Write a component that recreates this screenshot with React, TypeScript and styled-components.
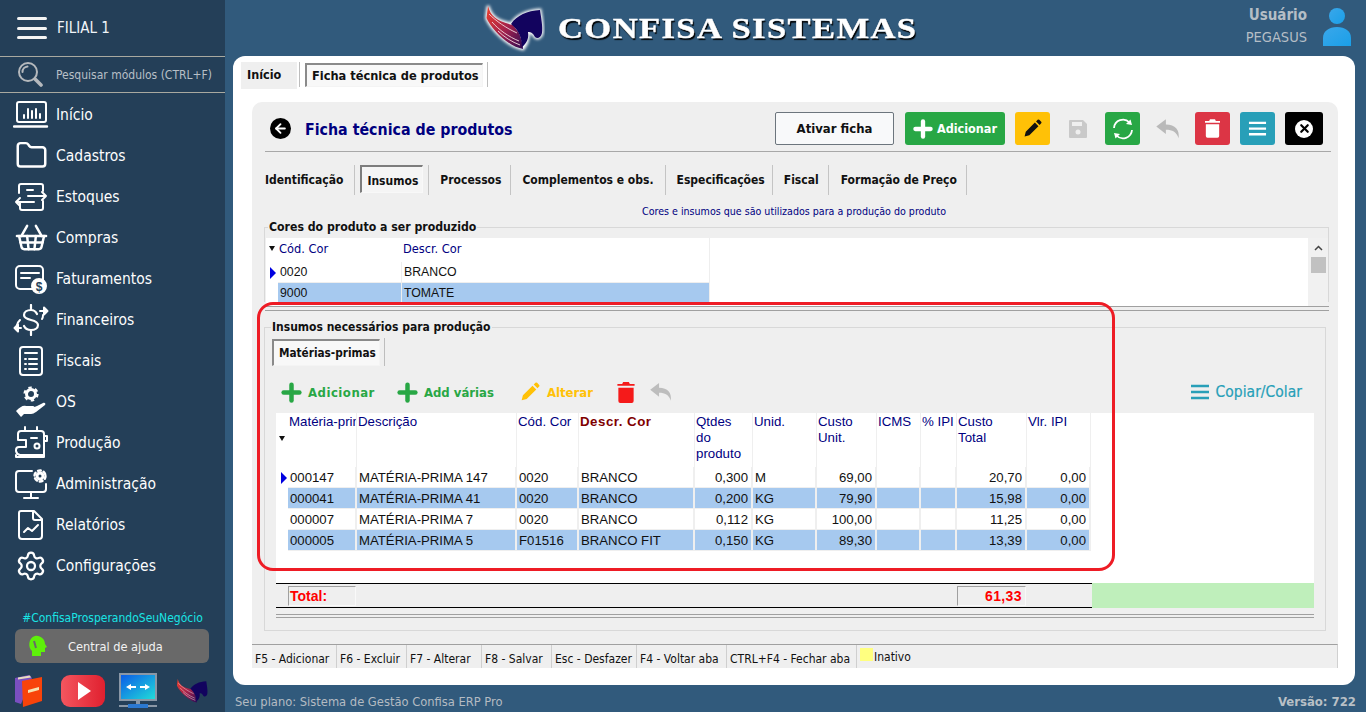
import React from 'react';
import styled, { createGlobalStyle } from 'styled-components';
import { Plus, X, ArrowLeft, Folder, ShoppingBasket, Settings } from 'lucide-react';

const UI = `"DejaVu Sans Condensed", "Noto Sans", sans-serif`;
const GRID = `"Liberation Sans", Arial, sans-serif`;

const Global = createGlobalStyle`
  html, body { margin: 0; padding: 0; height: 712px; overflow: hidden; background: #315a7c; }
  * { box-sizing: border-box; }
  #root { height: 712px; }
`;

const Page = styled.div`display: grid; grid-template-columns: 225px 1fr; height: 712px; font-family: ${UI};`;
const Side = styled.aside`background: #243f58; color: #fff; display: flex; flex-direction: column; height: 712px;`;
const SideHead = styled.div`height: 57px; display: flex; align-items: center; gap: 10px; padding: 0 0 0 17px; border-bottom: 1px solid #a9a9a0; font-size: 15px; color: #f0f4f8;`;
const Burger = styled.div`width: 30px; height: 22px; display: flex; flex-direction: column; justify-content: space-between; span { display: block; height: 3px; background: #f4f4f4; border-radius: 2px; }`;
const SearchRow = styled.div`height: 36px; display: flex; align-items: center; padding: 1px 0 0 17px; gap: 13px; border-bottom: 1px solid #a9a9a0; font-size: 12px; color: #b8bfc6;`;
const MenuList = styled.nav`display: flex; flex-direction: column; padding-top: 1px;`;
const MenuRow = styled.div`height: 41px; display: flex; align-items: center; font-size: 15.5px; color: #fdfdfd; padding-left: 13px;`;
const IconSlot = styled.span`width: 36px; height: 34px; display: flex; align-items: center; justify-content: center; margin-right: 7px;`;
const SideBottom = styled.div`margin-top: auto; padding-bottom: 3px; display: flex; flex-direction: column; align-items: stretch;`;
const HashTag = styled.div`color: #19e4e4; font-size: 12px; text-align: center; margin-bottom: 4px;`;
const HelpBtn = styled.div`margin: 0 16px 0 15px; height: 34px; border-radius: 6px; background: #696969; display: flex; align-items: center; color: #f2f2f2; font-size: 12.7px; padding-left: 12px; span { margin-left: 21px; }`;
const AppIcons = styled.div`display: flex; align-items: center; padding-left: 14px; height: 36px; margin-top: 10px;`;
const AppGap = styled.span<{ $w: number }>`display: block; width: ${p => p.$w}px;`;

const Main = styled.main`display: flex; flex-direction: column; background: #315a7c; height: 712px; min-width: 0;`;
const Top = styled.header`height: 56px; display: flex; align-items: center; padding: 0 14px 0 258px; flex: none;`;
const Brand = styled.div`font-family: "Liberation Serif", serif; font-weight: 700; font-size: 30px; color: #fff; letter-spacing: 1.2px; margin-left: 13px; text-shadow: 1px 2px 1px #000; -webkit-text-stroke: .4px #fff; transform: scaleX(1.153); transform-origin: left center; white-space: nowrap;`;
const User = styled.div`margin-left: auto; display: flex; align-items: center; gap: 15px;`;
const UserText = styled.div`text-align: right; color: #b5bec6; font-size: 14.5px; line-height: 22px; margin-top: -4px; b { font-size: 15px; display: block; }`;

const Card = styled.section`margin: 0 11px 0 8px; height: 629px; flex: none; background: #fff; border-radius: 12px; padding: 6px 18px 0 8px; display: flex; flex-direction: column;`;
const TopTabs = styled.div`display: flex; height: 27px; align-items: stretch; font-size: 12.5px; font-weight: 700; color: #111;`;
const HomeTab = styled.div`width: 56px; background: #efefef; padding: 5px 0 0 6px;`;
const Sep = styled.i<{ $h?: number; $ml?: number }>`display: block; width: 1px; background: #bdbdbd; margin: 0 5px 0 ${p => p.$ml ?? 2}px; height: ${p => p.$h ?? 25}px;`;
const ActiveTab = styled.div<{ $s?: number; $h?: number }>`height: ${p => p.$h ?? 24}px; margin-top: 1px; padding: 2px 3px 0 5px; border: 1px solid #f4f4f4; border-top: 2px solid #8a8a8a; border-left: 2px solid #8a8a8a; background: #f8f8f8; white-space: nowrap; line-height: ${p => (p.$h ?? 24) - 7}px; font-size: ${p => p.$s ?? 12.7}px;`;
const Panel = styled.div`margin: 13px 0 0 11px; width: 1086px; height: 566px; background: #efefef; border-radius: 10px 10px 0 0; display: flex; flex-direction: column;`;
const PanelHead = styled.div`height: 50px; margin: 0 7px 0 13px; border-bottom: 1px solid #a8a8a8; display: flex; align-items: flex-start; padding: 10px 8px 0 5px; flex: none;`;
const BackDot = styled.span`width: 21px; height: 21px; margin-top: 6px; border-radius: 50%; background: #000; color: #fff; display: flex; align-items: center; justify-content: center;`;
const Title = styled.h1`margin: 7px 0 0 14px; font-size: 15.8px; line-height: 22px; font-weight: 700; color: #00007f;`;
const Actions = styled.div`margin-left: auto; display: flex; gap: 10px;`;
const OutlineBtn = styled.div`width: 119px; height: 33px; margin-right: 1px; background: #f8f9fa; border: 1px solid #6c757d; border-radius: 2px; color: #111; font-size: 13px; font-weight: 700; display: flex; align-items: center; justify-content: center;`;
const SquareBtn = styled.div<{ $bg: string; $w?: number }>`width: ${p => p.$w ?? 35}px; height: 33px; border-radius: 3px; background: ${p => p.$bg}; color: #fff; display: flex; align-items: center; justify-content: center; font-size: 12.5px; font-weight: 700;`;
const AddBtn = styled(SquareBtn)`gap: 1px; padding-right: 3px;`;
const CloseDot = styled.span`width: 18px; height: 18px; border-radius: 9px; background: #fff; color: #000; display: flex; align-items: center; justify-content: center;`;
const TabsRow = styled.div`display: flex; align-items: stretch; height: 30px; margin: 13px 0 0 13px; font-size: 12px; font-weight: 700; color: #111; flex: none;`;
const SubTab = styled.div`padding: 7px 0 0; white-space: nowrap; line-height: 17px;`;
const TabLine = styled.i<{ $ml?: number; $mr?: number }>`display: block; width: 1px; background: #c4c4c4; margin: 0 ${p => p.$mr ?? 11}px 0 ${p => p.$ml ?? 10}px;`;
const ActiveSub = styled.div`height: 28px; padding: 5px 4px 0 5px; border: 1px solid #f8f8f8; border-top: 2px solid #7d7d7d; border-left: 2px solid #7d7d7d; background: #f5f5f5; line-height: 18px;`;
const Caption = styled.div`height: 20px; margin-top: 6px; padding-left: 390px; color: #00007f; font-size: 10.6px; line-height: 20px; flex: none; white-space: nowrap;`;
const Box = styled.fieldset`margin: 0; padding: 0; min-width: 0; border: 1px solid #d8d8d8; flex: none;`;
const Legend = styled.legend<{ $ml: number; $s: number }>`font-size: ${p => p.$s}px; font-weight: 700; color: #111; padding: 0 1px; margin-left: ${p => p.$ml}px; line-height: 14px;`;
const CoresBox = styled(Box)`margin: -1px 9px 0 12px; height: 82px; border-bottom: none;`;
const CoresWrap = styled.div`display: grid; grid-template-columns: 1fr 20px; height: 68px; background: #fff; margin: 4px 0 0 1px; font-family: ${GRID};`;
const CoresGrid = styled.div`display: grid; grid-template-rows: 24px 21px 21px;`;
const CoresHead = styled.div`display: grid; grid-template-columns: 13px 124px 306px; align-items: center; color: #00007f; width: 444px; padding-bottom: 4px; border-right: 1px solid #eee; font-family: ${UI}; font-size: 12.7px;`;
const CoresRow = styled.div`display: grid; grid-template-columns: 12px 124px 308px; font-size: 12.3px; color: #111; align-items: stretch; line-height: 20px; width: 444px;`;
const Ind = styled.span`display: flex; align-items: center; justify-content: center; font-size: 8px; color: #111; padding-right: 1px;`;
const Arrow = styled.span<{ $ml?: number }>`display: block; width: 0; height: 0; border-left: 6px solid #0000e0; border-top: 6px solid transparent; border-bottom: 6px solid transparent; margin: 0 0 0 ${p => p.$ml ?? 2}px;`;
const SortTri = styled.span`display: block; width: 0; height: 0; border-left: 3px solid transparent; border-right: 3px solid transparent; border-top: 5px solid #111;`;
const CCell = styled.span<{ $sel?: boolean }>`padding-left: 2px; background: ${p => p.$sel ? '#a6c9ef' : '#fff'}; border-right: 1px solid #eee; border-bottom: 1px solid #eee;`;
const ScrollBar = styled.div`background: #f1f1f1; display: flex; flex-direction: column; align-items: center; padding-top: 7px; gap: 6px; font-size: 0;`;
const ScrollThumb = styled.div`width: 15px; height: 16px; background: #c1c1c1;`;
const Splitter = styled.div`height: 5px; margin: 4px 9px 0 13px; border-top: 1px solid #a0a0a0; border-bottom: 1px solid #a0a0a0; flex: none;`;
const InsumosBox = styled(Box)`margin: 9px 12px 0 12px; height: 311px; padding: 0 0 0 7px; display: block;`;
const InnerTab = styled.div`display: flex; height: 28px; margin-top: 4px; font-size: 12px; font-weight: 700; color: #111;`;
const GridTools = styled.div`display: flex; align-items: center; height: 24px; margin: 14px 0 0 6px; font-size: 13px; font-weight: 700; white-space: nowrap;`;
const Tool = styled.div<{ $c: string; $ml?: number; $gap?: number; $ls?: number }>`display: flex; align-items: center; gap: ${p => p.$gap ?? 7}px; color: ${p => p.$c}; margin-left: ${p => p.$ml ?? 0}px; letter-spacing: ${p => p.$ls ?? 0}px;`;
const CopyTool = styled(Tool)`margin-left: auto; margin-right: 23px; font-weight: 400; gap: 6px; font-size: 15.5px; -webkit-text-stroke: .2px currentColor;`;
const TableArea = styled.div`margin: 9px 0 0 4px; width: 1038px; height: 170px; background: #fff; font-family: ${GRID}; font-size: 13.2px; color: #111;`;
const TPL = `12px 69px 160px 62px 116px 58px 64px 60px 44px 36px 70px 64px`;
const THead = styled.div`display: grid; grid-template-columns: ${TPL}; width: 815px; height: 54px; color: #00007f; font-size: 13.3px; line-height: 16px;`;
const Th = styled.span<{ $red?: boolean }>`padding: 1px 0 0 1px; border-right: 1px solid #efefef; overflow: hidden; white-space: pre; color: ${p => p.$red ? '#7f0000' : 'inherit'}; font-weight: ${p => p.$red ? 700 : 400}; letter-spacing: ${p => p.$red ? '.5px' : '0'};`;
const IndHead = styled.span`display: flex; align-items: flex-start; justify-content: center; padding: 23px 0 0 0;`;
const TRow = styled.div`display: grid; grid-template-columns: ${TPL}; width: 815px; height: 21px; line-height: 22px;`;
const Td = styled.span<{ $sel?: boolean; $r?: boolean }>`padding: 0 ${p => p.$r ? 3 : 1}px 0 2px; background: ${p => p.$sel ? '#a6c9ef' : '#fff'}; border-right: 2px solid #efefef; border-bottom: 1px solid #efefef; text-align: ${p => p.$r ? 'right' : 'left'}; white-space: nowrap; overflow: hidden;`;
const TIndCell = styled.span`display: flex; align-items: center;`;
const TotalBar = styled.div`display: grid; grid-template-columns: 816px 222px; margin-left: 4px; width: 1038px; height: 25px; font-family: ${GRID};`;
const TotalLeft = styled.div`border-top: 1px solid #000; border-bottom: 1px solid #000; display: grid; grid-template-columns: 12px 68px 601px 69px; align-items: center;`;
const TotalCell = styled.span<{ $r?: boolean }>`height: 20px; border: 1px solid #f9f9f9; border-top-color: #a0a0a0; border-left-color: #a0a0a0; color: #f00; font-weight: 700; font-size: 14px; line-height: 18px; padding: 0 3px 0 1px; text-align: ${p => p.$r ? 'right' : 'left'}; letter-spacing: ${p => p.$r ? '.4px' : '0'};`;
const Green = styled.div`background: #bfefbb;`;
const DoubleLine = styled.div`height: 4px; margin: 6px 0 0 4px; width: 1038px; border-top: 1px solid #a0a0a0; border-bottom: 1px solid #a0a0a0;`;
const Status = styled.div`margin-top: auto; height: 24px; flex: none; border-top: 1px solid #a0a0a0; border-right: 1px solid #d0d0d0; display: flex; align-items: stretch; font-size: 12px; color: #111;`;
const StatusCell = styled.div<{ $w: number }>`width: ${p => p.$w}px; display: flex; align-items: center; padding: 5px 0 0 3px; border-right: 1px solid #cfcfcf; white-space: nowrap;`;
const Inativo = styled.div`display: flex; align-items: flex-start; padding: 3px 0 0 3px; i { display: block; width: 13px; height: 13px; background: #ffff80; margin-right: 1px; } span { margin-top: 2px; }`;
const Bottom = styled.footer`height: 27px; flex: none; display: flex; justify-content: space-between; align-items: center; padding: 6px 10px 0 10px; color: #b4bbc2; font-size: 12.8px;`;
const Version = styled.b`font-size: 13px; color: #b9c0c6;`;
const RedMark = styled.div`position: absolute; left: 257px; top: 302px; width: 858px; height: 269px; border: 3px solid #ee1c25; border-radius: 16px; pointer-events: none; z-index: 5;`;

const S = { fill: 'none', stroke: '#fff', strokeWidth: 2, strokeLinecap: 'round' as const, strokeLinejoin: 'round' as const };

const ILaptop = () => <svg width="36" height="30" viewBox="0 0 36 30" {...S}><rect x="4" y="2" width="29" height="20" rx="2" /><path d="M1 26.500h33" strokeWidth="2.400" /><path d="M11 18v-3M15 18V9M19 18v-7M23 18v-9M27 18v-4" strokeWidth="2" /></svg>;
const IFolder = () => <Folder size={33} color="#fff" strokeWidth={1.8} />;
const IBoxes = () => <svg width="34" height="30" viewBox="0 0 34 30" {...S}><path d="M5 11V4a2 2 0 0 1 2-2h20a2 2 0 0 1 2 2v5M6 21v5a2 2 0 0 0 2 2h19a2 2 0 0 0 2-2v-7" /><path d="M13 8h6M14 14h18M28 10l4 4-4 4M20 20H2M6 16l-4 4 4 4" /></svg>;
const IBasket = () => <ShoppingBasket size={35} color="#fff" strokeWidth={1.7} />;
const IBill = () => <svg width="36" height="30" viewBox="0 0 36 30" {...S}><path d="M25 2H7a4 4 0 0 0-4 4v15a4 4 0 0 0 4 4h12M30 16V6a4 4 0 0 0-4-4" /><path d="M8 9h18M8 14h9" /><circle cx="26" cy="22" r="7" fill="#fff" stroke="#fff" /><text x="26" y="26.500" fontSize="12" fontFamily="Liberation Sans" fontWeight="700" textAnchor="middle" fill="#243f58" stroke="none">$</text></svg>;
const IMoney = () => <svg width="36" height="32" viewBox="0 0 36 32" {...S}><path d="M24 10c-1-2-3-4-6-4-4 0-7 2-7 5s3 4 7 5 7 2 7 5-3 5-7 5c-3 0-6-2-7-4M18 1v4M18 27v4" strokeWidth="2.200" /><path d="M27 7h6" /><path d="M31 3.500l3.500 3.500-3.500 3.500z" fill="#fff" /><path d="M3 24h5" /><path d="M5 20.500L1.500 24 5 27.500z" fill="#fff" /><path d="M7 16c-1 1-3 3-3 5M29 15c1-1 1-2 1-4" /></svg>;
const IDoc = () => <svg width="26" height="32" viewBox="0 0 26 32" {...S}><rect x="2" y="2" width="22" height="28" rx="3" /><path d="M7 8h12M7 14h1M11 14h8M7 19h1M11 19h8M7 24h1M11 24h8" /></svg>;
const IHand = () => <svg width="32" height="32" viewBox="0 0 32 32"><path d="M1 25c4-4 7-6 10-5h7c2 0 2 3 0 3h-4l8-3 6-3c2-1 3 1 2 2l-9 7c-2 1-3 2-5 2H9l-3 3z" fill="#fff" /><circle cx="16" cy="8" r="4.500" fill="none" stroke="#fff" strokeWidth="3" /><circle cx="16" cy="8" r="6.500" fill="none" stroke="#fff" strokeWidth="2.200" strokeDasharray="3.400 3.400" /></svg>;
const ISew = () => <svg width="36" height="34" viewBox="0 0 36 34" {...S}><path d="M5 14V8a3 3 0 0 1 3-3h20a3 3 0 0 1 3 3v21H7a5 5 0 0 1-4-4v-1c0-2 1-3 3-3h7v-7H5" /><path d="M3 29v2h28v-2M12 1v4M24 1v4M31 10h3v5h-3" /><circle cx="24" cy="20" r="2.500" /><path d="M18 12h6" /></svg>;
const IAdmin = () => <svg width="36" height="32" viewBox="0 0 36 32" {...S}><path d="M19 3H6a3 3 0 0 0-3 3v15a3 3 0 0 0 3 3h24a3 3 0 0 0 3-3v-5M18 24v5M11 30h14" /><circle cx="27" cy="8" r="3" strokeWidth="3" /><circle cx="27" cy="8" r="5.500" strokeWidth="2.400" strokeDasharray="2.900 2.900" /></svg>;
const IReport = () => <svg width="28" height="32" viewBox="0 0 28 32" {...S}><path d="M4 2h13l8 8v17a3 3 0 0 1-3 3H5a3 3 0 0 1-3-3V4a2 2 0 0 1 2-2zM16 2v7a2 2 0 0 0 2 2h7" /><path d="M7 23l4-4 4 3 6-6" /></svg>;
const IGear = () => <Settings size={32} color="#fff" strokeWidth={1.7} />;
const ISearch = () => <svg width="26" height="28" viewBox="0 0 26 28" fill="none" stroke="#b5b9bd" strokeLinecap="round"><circle cx="11" cy="11" r="9" strokeWidth="2" /><path d="M5.500 11a5.500 5.500 0 0 1 5-5.500" strokeWidth="2" /><path d="M18 18l6 6" strokeWidth="3.600" /></svg>;

const menu: [string, React.ReactNode][] = [
  ['Início', <ILaptop />], ['Cadastros', <IFolder />], ['Estoques', <IBoxes />], ['Compras', <IBasket />],
  ['Faturamentos', <IBill />], ['Financeiros', <IMoney />], ['Fiscais', <IDoc />], ['OS', <IHand />],
  ['Produção', <ISew />], ['Administração', <IAdmin />], ['Relatórios', <IReport />], ['Configurações', <IGear />],
];

const Pegasus = ({ w, h, glow }: { w: number; h: number; glow?: boolean }) => (
  <svg width={w} height={h} viewBox="0 0 62 50" style={{ flex: 'none' }}>
    <defs>
      <linearGradient id="pw" x1="0" y1="0" x2="1" y2="1"><stop offset="0" stopColor="#f0402c" /><stop offset=".55" stopColor="#a0204c" /><stop offset="1" stopColor="#2a0a55" /></linearGradient>
      <filter id="gl" x="-20%" y="-20%" width="140%" height="140%"><feGaussianBlur stdDeviation="1.800" /></filter>
    </defs>
    {glow && <g filter="url(#gl)" fill="#fff" stroke="#fff" strokeWidth="3"><path d="M5 3C8 14 14 18 28 21 34 12 44 8 57 7c1 7 3 17 2 23-1 5-5 6-7 4-2-4-4-5-7-5 1 6-1 12-5 17C26 44 8 26 3.500 15z" /></g>}
    <path d="M5 3C8 14 14 18 30 22l6 8c2 6 4 10 4 16C26 44 8 26 3.500 15z" fill="url(#pw)" />
    <path d="M6 11c7 7 17 14 28 19M9 19c7 8 17 15 27 19M15 28c6 6 14 11 22 14" stroke="#f3d8de" strokeWidth=".9" fill="none" />
    <path d="M28 21C34 12 44 8 57 7c1 7 3 17 2 23-1 5-5 6-7 4-2-4-4-5-7-5 1 6-1 11-6 15 0-8-3-17-11-23z" fill="#12035e" />
  </svg>
);

const Book = () => <svg width="30" height="34" viewBox="0 0 30 34"><path d="M1 4l14-3 3 3L7 30l-6-2z" fill="#7a4fc0" /><path d="M4 3.500l12-2 1 2-13 2z" fill="#e7dcc0" /><path d="M8 7l20-4v24L9 33z" fill="#f8430a" /><path d="M14 16l11-3v3l-11 3z" fill="#f5e2b0" /></svg>;
const Tube = () => <svg width="44" height="32" viewBox="0 0 44 32"><defs><linearGradient id="yt" x1="0" x2="1"><stop offset="0" stopColor="#f4565f" /><stop offset="1" stopColor="#e0202f" /></linearGradient></defs><rect width="44" height="32" rx="9" fill="url(#yt)" /><path d="M17 7l13 9-13 9z" fill="#fff" /></svg>;
const Remote = () => <svg width="38" height="36" viewBox="0 0 38 36"><defs><linearGradient id="rm" x1="0" y1="0" x2="1" y2="1"><stop offset="0" stopColor="#0a58e8" /><stop offset="1" stopColor="#22e0d8" /></linearGradient></defs><rect x="1" y="1" width="36" height="26" fill="url(#rm)" stroke="#8a97a6" strokeWidth="2" /><rect x="17" y="27" width="4" height="4" fill="#8a97a6" /><rect y="32" width="38" height="2" fill="#8a97a6" /><rect x="9" y="31" width="20" height="4" fill="#2b78d0" /><path d="M7 14l5-3v2h5v2h-5v2zM31 14l-5-3v2h-5v2h5v2z" fill="#fff" /></svg>;
const HelpHead = () => <svg width="20" height="22" viewBox="0 0 20 22"><path d="M8 1c5-1 10 3 10 8l2 3-2 1v4h-4v4H5v-5C1 13 1 3 8 1z" fill="#5ef00a" /><path d="M7 6l2 7" stroke="#696969" strokeWidth="2" /></svg>;
const Avatar = () => <svg width="30" height="40" viewBox="0 0 30 40"><defs><linearGradient id="av" x1="0" y1="0" x2="1" y2="1"><stop offset="0" stopColor="#3aa7ea" /><stop offset="1" stopColor="#1a9fe8" /></linearGradient></defs><circle cx="15" cy="8" r="8" fill="url(#av)" /><path d="M1 38V30C1 23 7 19 15 19s14 4 14 11v8z" fill="url(#av)" /></svg>;
const Undo = ({ c, s }: { c: string; s: number }) => <svg width={s} height={s * .9} viewBox="0 0 24 22"><path d="M10 2L1 9l9 7v-4c6 0 10 2 12 8 1-8-3-13-12-13z" fill={c} /></svg>;
const SolidPen = ({ c, s }: { c: string; s: number }) => <svg width={s} height={s} viewBox="0 0 24 24"><path d="M2 22l1.500-6L15 4.500l4.500 4.500L8 20.500zM16.500 3l2-2a1.500 1.500 0 0 1 2 0l2.500 2.500a1.500 1.500 0 0 1 0 2l-2 2z" fill={c} /></svg>;
const Bin = ({ c, w, h }: { c: string; w: number; h: number }) => <svg width={w} height={h} viewBox="0 0 18 22"><path d="M6 0h6l1 2h5v2H0V2h5zM1 6h16v14a2 2 0 0 1-2 2H3a2 2 0 0 1-2-2z" fill={c} /></svg>;
const FloppyGray = () => <svg width="18" height="18" viewBox="0 0 18 18"><path d="M1 0h13l4 4v13a1 1 0 0 1-1 1H1a1 1 0 0 1-1-1V1a1 1 0 0 1 1-1zM3 2v4h10V2z" fill="#c9c9c9" fillRule="evenodd" /><circle cx="9" cy="12" r="2.500" fill="#efefef" /></svg>;
const Bars = ({ c, w }: { c: string; w: number }) => <svg width={w} height={w * .8} viewBox="0 0 20 16"><path d="M1 2h18M1 8h18M1 14h18" stroke={c} strokeWidth="2.500" /></svg>;
const Sync = () => <svg width="24" height="24" viewBox="0 0 24 24" fill="none" stroke="#fff" strokeWidth="1.800"><path d="M3 11A9 9 0 0 1 18.500 5.500" /><path d="M21 13A9 9 0 0 1 5.500 18.500" /><path d="M21 8l-1.500-5.500L15 7z" fill="#fff" stroke="none" /><path d="M3 16l1.500 5.500L9 17z" fill="#fff" stroke="none" /></svg>;

const COLS = ['000147|MATÉRIA-PRIMA 147|0020|BRANCO|0,300|M|69,00|||20,70|0,00', '000041|MATÉRIA-PRIMA 41|0020|BRANCO|0,200|KG|79,90|||15,98|0,00', '000007|MATÉRIA-PRIMA 7|0020|BRANCO|0,112|KG|100,00|||11,25|0,00', '000005|MATÉRIA-PRIMA 5|F01516|BRANCO FIT|0,150|KG|89,30|||13,39|0,00'];
const RIGHT = new Set([4, 6, 7, 8, 9, 10]);
const HEADS = ['Matéria-prima', 'Descrição', 'Cód. Cor', 'Descr. Cor', 'Qtdes\ndo\nproduto', 'Unid.', 'Custo\nUnit.', 'ICMS', '% IPI', 'Custo\nTotal', 'Vlr. IPI'];

export default function App() {
  return (
    <Page>
      <Global />
      <Side>
        <SideHead><Burger><span /><span /><span /></Burger><span>FILIAL 1</span></SideHead>
        <SearchRow><ISearch /><span>Pesquisar módulos (CTRL+F)</span></SearchRow>
        <MenuList>{menu.map(([t, i]) => <MenuRow key={t}><IconSlot>{i}</IconSlot>{t}</MenuRow>)}</MenuList>
        <SideBottom>
          <HashTag>#ConfisaProsperandoSeuNegócio</HashTag>
          <HelpBtn><HelpHead /><span>Central de ajuda</span></HelpBtn>
          <AppIcons><Book /><AppGap $w={17} /><Tube /><AppGap $w={14} /><Remote /><AppGap $w={18} /><Pegasus w={34} h={28} /></AppIcons>
        </SideBottom>
      </Side>
      <Main>
        <Top>
          <Pegasus w={62} h={50} glow />
          <Brand>CONFISA SISTEMAS</Brand>
          <User><UserText><b>Usuário</b>PEGASUS</UserText><Avatar /></User>
        </Top>
        <Card>
          <TopTabs><HomeTab>Início</HomeTab><Sep /><ActiveTab>Ficha técnica de produtos</ActiveTab><Sep $ml={4} /></TopTabs>
          <Panel>
            <PanelHead>
              <BackDot><ArrowLeft size={15} strokeWidth={3} /></BackDot>
              <Title>Ficha técnica de produtos</Title>
              <Actions>
                <OutlineBtn>Ativar ficha</OutlineBtn>
                <AddBtn $bg="#28a745" $w={100}><Plus size={26} strokeWidth={4} />Adicionar</AddBtn>
                <SquareBtn $bg="#ffc107"><SolidPen c="#111" s={19} /></SquareBtn>
                <SquareBtn $bg="transparent"><FloppyGray /></SquareBtn>
                <SquareBtn $bg="#28a745"><Sync /></SquareBtn>
                <SquareBtn $bg="transparent"><Undo c="#b9b9b9" s={26} /></SquareBtn>
                <SquareBtn $bg="#dc3545"><Bin c="#fff" w={15} h={19} /></SquareBtn>
                <SquareBtn $bg="#289fb8"><Bars c="#fff" w={19} /></SquareBtn>
                <SquareBtn $bg="#000" $w={38}><CloseDot><X size={13} strokeWidth={4} /></CloseDot></SquareBtn>
              </Actions>
            </PanelHead>
            <TabsRow>
              <SubTab>Identificação</SubTab><TabLine $ml={11} $mr={5} />
              <ActiveSub>Insumos</ActiveSub><TabLine $ml={5} $mr={11} />
              <SubTab>Processos</SubTab><TabLine $ml={9} />
              <SubTab>Complementos e obs.</SubTab><TabLine $ml={11} />
              <SubTab>Especificações</SubTab><TabLine $ml={7} />
              <SubTab>Fiscal</SubTab><TabLine $ml={9} $mr={12} />
              <SubTab>Formação de Preço</SubTab><TabLine $ml={9} />
            </TabsRow>
            <Caption>Cores e insumos que são utilizados para a produção do produto</Caption>
            <CoresBox>
              <Legend $ml={3} $s={12.2}>Cores do produto a ser produzido</Legend>
              <CoresWrap>
                <CoresGrid>
                  <CoresHead><Ind><SortTri /></Ind><span>Cód. Cor</span><span>Descr. Cor</span></CoresHead>
                  <CoresRow><Ind><Arrow /></Ind><CCell>0020</CCell><CCell>BRANCO</CCell></CoresRow>
                  <CoresRow><Ind /><CCell $sel>9000</CCell><CCell $sel>TOMATE</CCell></CoresRow>
                </CoresGrid>
                <ScrollBar><svg width="9" height="6" viewBox="0 0 9 6"><path d="M1 5l3.500-3.500L8 5" fill="none" stroke="#444" strokeWidth="1.500" /></svg><ScrollThumb /></ScrollBar>
              </CoresWrap>
            </CoresBox>
            <Splitter />
            <InsumosBox>
              <Legend $ml={-1} $s={12}>Insumos necessários para produção</Legend>
              <InnerTab><ActiveTab $s={11.7} $h={27}>Matérias-primas</ActiveTab><Sep $ml={4} $h={28} /></InnerTab>
              <GridTools>
                <Tool $c="#28a745" $gap={3} $ls={.5}><Plus size={27} strokeWidth={4} />Adicionar</Tool>
                <Tool $c="#28a745" $ml={19} $gap={3}><Plus size={27} strokeWidth={4} />Add várias</Tool>
                <Tool $c="#ffc107" $ml={26}><SolidPen c="#ffc107" s={20} />Alterar</Tool>
                <Tool $c="#f01d1d" $ml={24}><Bin c="#f51a1a" w={18} h={21} /></Tool>
                <Tool $c="#bbb" $ml={14}><Undo c="#bdbdbd" s={24} /></Tool>
                <CopyTool $c="#289fb8"><Bars c="#289fb8" w={20} />Copiar/Colar</CopyTool>
              </GridTools>
              <TableArea>
                <THead><IndHead><SortTri /></IndHead>{HEADS.map((h, i) => <Th key={h} $red={i === 3}>{h}</Th>)}</THead>
                {COLS.map((r, i) => (
                  <TRow key={r}>
                    <TIndCell>{i === 0 && <Arrow $ml={5} />}</TIndCell>
                    {r.split('|').map((c, j) => <Td key={j} $sel={i % 2 === 1} $r={RIGHT.has(j)}>{c}</Td>)}
                  </TRow>
                ))}
              </TableArea>
              <TotalBar>
                <TotalLeft><span /><TotalCell>Total:</TotalCell><span /><TotalCell $r>61,33</TotalCell></TotalLeft>
                <Green />
              </TotalBar>
              <DoubleLine />
            </InsumosBox>
            <Status>
              <StatusCell $w={85}>F5 - Adicionar</StatusCell>
              <StatusCell $w={70}>F6 - Excluir</StatusCell>
              <StatusCell $w={75}>F7 - Alterar</StatusCell>
              <StatusCell $w={70}>F8 - Salvar</StatusCell>
              <StatusCell $w={85}>Esc - Desfazer</StatusCell>
              <StatusCell $w={90}>F4 - Voltar aba</StatusCell>
              <StatusCell $w={130}>CTRL+F4 - Fechar aba</StatusCell>
              <Inativo><i /><span>Inativo</span></Inativo>
            </Status>
          </Panel>
        </Card>
        <Bottom><span>Seu plano: Sistema de Gestão Confisa ERP Pro</span><Version>Versão: 722</Version></Bottom>
      </Main>
      <RedMark />
    </Page>
  );
}
